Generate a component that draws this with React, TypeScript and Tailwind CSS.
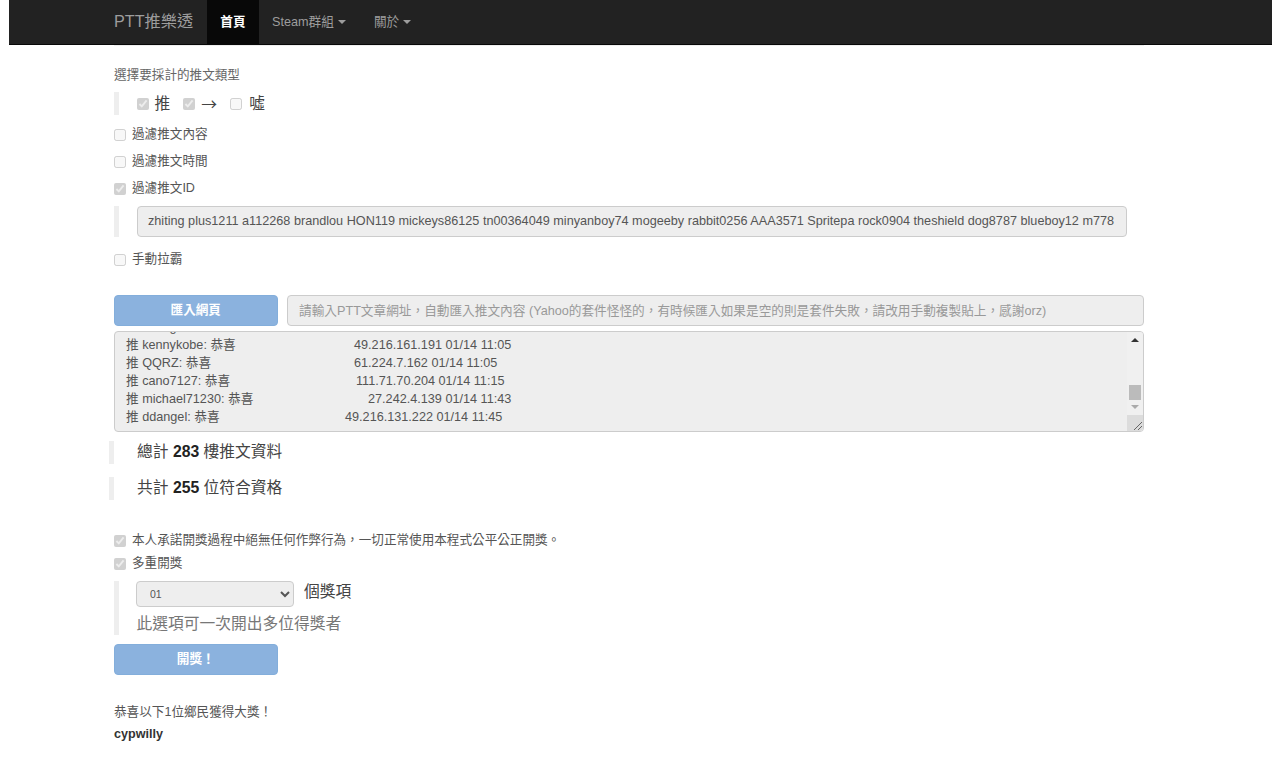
import React from "react";

const font = { fontFamily: '"Liberation Sans", "Noto Sans CJK TC", sans-serif' };

const rows = [
  { name: "推 kennykobe: 恭喜", w: "w-[228px]", ip: "49.216.161.191 01/14 11:05" },
  { name: "推 QQRZ: 恭喜", w: "w-[228px]", ip: "61.224.7.162 01/14 11:05" },
  { name: "推 cano7127: 恭喜", w: "w-[230px]", ip: "111.71.70.204 01/14 11:15" },
  { name: "推 michael71230: 恭喜", w: "w-[242px]", ip: "27.242.4.139 01/14 11:43" },
  { name: "推 ddangel: 恭喜", w: "w-[219px]", ip: "49.216.131.222 01/14 11:45" },
];

function Check({ checked = false, label }: { checked?: boolean; label: string }) {
  return (
    <label className="flex items-center h-[17px] text-[12.6px] text-[#555]">
      <input type="checkbox" disabled defaultChecked={checked} className="w-[12px] h-[12px] m-0 mr-[6px]" />
      <span>{label}</span>
    </label>
  );
}

function Caret() {
  return <span className="inline-block ml-[4px] w-0 h-0 align-middle border-x-[4px] border-x-transparent border-t-[4px] border-t-[#9d9d9d]" />;
}

export default function App() {
  return (
    <div className="min-h-[758px] bg-white pl-[9px] pr-[8px]" style={font}>
      <nav className="h-[45px] bg-[#222222] border-b border-b-[#080808] flex pl-[105px] text-[12.66px] text-[#9d9d9d]">
        <div className="text-[16.2px] leading-[42px] mr-[14px] w-[79px] whitespace-nowrap">PTT推樂透</div>
        <div className="w-[52px] h-[44px] bg-[#080808] text-white font-bold flex items-center justify-center">首頁</div>
        <div className="flex items-center pl-[13px] pr-[15px]">Steam群組<Caret /></div>
        <div className="flex items-center pl-[13px]">關於<Caret /></div>
      </nav>

      <main className="w-[1030px] ml-[105px] text-[#444]">
        <div className="h-[1px] bg-[#eeeeee]" />
        <p className="mt-[21px] h-[17px] text-[12.6px] leading-[17px] text-[#666]">選擇要採計的推文類型</p>

        <div className="mt-[8px] h-[23px] border-l-[5px] border-l-[#eeeeee] pl-[17.5px] flex items-center text-[15.75px]">
          <input type="checkbox" disabled defaultChecked className="w-[12px] h-[12px] m-0 mr-[6px]" />
          <span className="mr-[13px]">推</span>
          <input type="checkbox" disabled defaultChecked className="w-[12px] h-[12px] m-0 mr-[6px]" />
          <span className="mr-[13px] w-[16px] font-['Noto_Sans_CJK_TC']">→</span>
          <input type="checkbox" disabled className="w-[12px] h-[12px] m-0 mr-[7px]" />
          <span>噓</span>
        </div>

        <div className="mt-[11px] flex flex-col gap-[10px]">
          <Check label="過濾推文內容" />
          <Check label="過濾推文時間" />
          <Check checked label="過濾推文ID" />
        </div>

        <div className="mt-[9px] h-[31px] border-l-[5px] border-l-[#eeeeee] pl-[17.5px]">
          <div className="h-[31px] w-[990px] rounded-[4px] border border-[#cccccc] bg-[#eeeeee] pl-[10.5px] text-[12.66px] leading-[29px] text-[#555] whitespace-nowrap overflow-hidden">
            zhiting plus1211 a112268 brandlou HON119 mickeys86125 tn00364049 minyanboy74 mogeeby rabbit0256 AAA3571 Spritepa rock0904 theshield dog8787 blueboy12 m778
          </div>
        </div>

        <div className="mt-[14px]">
          <Check label="手動拉霸" />
        </div>

        <div className="mt-[27px] flex gap-[9.5px] pr-[0.5px]">
          <button disabled className="w-[163.5px] h-[31px] shrink-0 rounded-[4px] border border-[#83aedb] bg-[#8bb2de] text-white text-[12.6px] font-bold">匯入網頁</button>
          <input
            disabled
            placeholder="請輸入PTT文章網址，自動匯入推文內容 (Yahoo的套件怪怪的，有時候匯入如果是空的則是套件失敗，請改用手動複製貼上，感謝orz)"
            className="flex-1 h-[31px] rounded-[4px] border border-[#cccccc] bg-[#eeeeee] px-[11px] text-[12.66px] placeholder:text-[#999999]"
          />
        </div>

        <div className="relative mt-[5px] h-[101px] rounded-[4px] border border-[#cccccc] bg-[#eeeeee] overflow-hidden text-[12.66px] leading-[18px] text-[#555] pl-[11px] pt-[4px]">
          <div className="flex h-[18px] -mt-[18px] whitespace-nowrap pl-[16px]">
            <span>sheng</span>
          </div>
          {rows.map((r) => (
            <div key={r.name} className="flex h-[18px] whitespace-nowrap">
              <span className={r.w}>{r.name}</span>
              <span>{r.ip}</span>
            </div>
          ))}
          <div className="absolute right-0 top-0 bottom-0 w-[16px] bg-[#f0f0f0] flex flex-col items-center">
            <span className="mt-[6px] w-0 h-0 border-x-[4px] border-x-transparent border-b-[4px] border-b-[#333]" />
            <span className="mt-[43px] w-[12px] h-[15px] bg-[#bbbbbb]" />
            <span className="mt-[5px] w-0 h-0 border-x-[4px] border-x-transparent border-t-[4px] border-t-[#aaaaaa]" />
          </div>
          <svg className="absolute right-0 bottom-0 w-[16px] h-[16px] bg-[#dcdcdc]" viewBox="0 0 16 16">
            <path d="M7 15 15 7M11 15 15 11" stroke="#666" strokeWidth="1" fill="none" />
          </svg>
        </div>

        <div className="-ml-[5px] mt-[9px] h-[23px] border-l-[5px] border-l-[#eeeeee] pl-[23px] text-[15.75px] leading-[21px]">
          總計 <b className="text-[#222]">283</b> 樓推文資料
        </div>
        <div className="-ml-[5px] mt-[13px] h-[23px] border-l-[5px] border-l-[#eeeeee] pl-[23px] text-[15.75px] leading-[21px]">
          共計 <b className="text-[#222]">255</b> 位符合資格
        </div>

        <div className="mt-[32px]">
          <Check checked label="本人承諾開獎過程中絕無任何作弊行為，一切正常使用本程式公平公正開獎。" />
        </div>
        <div className="mt-[6px]">
          <Check checked label="多重開獎" />
        </div>

        <div className="mt-[9px] h-[54px] border-l-[5px] border-l-[#eeeeee] pl-[17px] text-[15.75px]">
          <div className="flex h-[26px]">
            <select disabled className="w-[158px] h-[26px] rounded-[4px] border border-[#cccccc] bg-[#eeeeee] pl-[9px] text-[10.5px] text-[#555]">
              <option>01</option>
            </select>
            <span className="ml-[10px] -mt-[1px] leading-[24px]">個獎項</span>
          </div>
          <div className="mt-[3px] pl-[0.5px] leading-[28px] text-[#777]">此選項可一次開出多位得獎者</div>
        </div>

        <button disabled className="block mt-[9px] w-[163.5px] h-[31px] rounded-[4px] border border-[#83aedb] bg-[#8bb2de] text-white text-[12.6px] font-bold">開獎！</button>

        <p className="mt-[29px] text-[12.6px] leading-[17px] text-[#555]">恭喜以下1位鄉民獲得大獎！</p>
        <p className="mt-[5px] text-[12.6px] leading-[17px] font-bold text-[#333]">cypwilly</p>
      </main>
    </div>
  );
}
